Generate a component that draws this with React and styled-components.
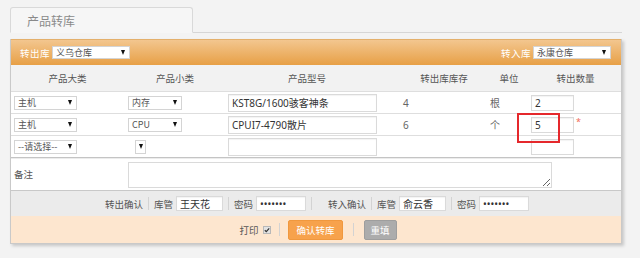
import React from "react";
import styled, { createGlobalStyle } from "styled-components";

const rows = [
  { big: "主机", small: "内存", model: "KST8G/1600骇客神条", stock: "4", unit: "根", qty: "2" },
  { big: "主机", small: "CPU", model: "CPUI7-4790散片", stock: "6", unit: "个", qty: "5", mark: true },
  { big: "--请选择--", small: "", model: "", stock: "", unit: "", qty: "" },
];

const heads = [
  { title: "产品大类" },
  { title: "产品小类" },
  { title: "产品型号" },
  { title: "转出库库存", shift: 12 },
  { title: "单位" },
  { title: "转出数量" },
];

const Select = ({ value, width, height }) => (
  <SelectBox $w={width} $h={height}>
    <span>{value}</span>
    <Arrow />
  </SelectBox>
);

const App = () => {
  return (
    <Page>
      <GlobalStyle />
      <TabBar>
        <Tab>产品转库</Tab>
      </TabBar>

      <Panel>
        <PanelHead>
          <HeadGroup>
            <HeadLabel>转出库</HeadLabel>
            <Select value="义乌仓库" width={78} height={13} />
          </HeadGroup>
          <HeadGroup>
            <HeadLabel>转入库</HeadLabel>
            <Select value="永康仓库" width={78} height={13} />
          </HeadGroup>
        </PanelHead>

        <HeaderRow>
          {heads.map((h) => (
            <HeadCell key={h.title} $shift={h.shift}>
              {h.title}
            </HeadCell>
          ))}
        </HeaderRow>

        {rows.map((r, i) => (
          <Row key={i}>
            <Cell $pad={3}>
              <Select value={r.big} width={63} />
            </Cell>
            <Cell $pad={r.small ? 4 : 11}>
              <Select value={r.small} width={r.small ? 54 : 11} />
            </Cell>
            <Cell $pad={2}>
              <TextInput readOnly value={r.model} $w={149} />
            </Cell>
            <Cell $pad={15}>{r.stock}</Cell>
            <Cell $pad={2}>{r.unit}</Cell>
            <QtyCell>
              <TextInput readOnly value={r.qty} $w={43} $h={16} />
              {r.mark && <Star>*</Star>}
              {r.mark && <RedBox />}
            </QtyCell>
          </Row>
        ))}

        <RemarkRow>
          <RemarkLabel>备注</RemarkLabel>
          <Remark readOnly />
        </RemarkRow>

        <ConfirmRow>
          <Strong>转出确认</Strong>
          <Divider />
          <Field>
            库管<TextInput readOnly value="王天花" $w={47} $h={15} />
          </Field>
          <Divider />
          <Field>
            密码<TextInput type="password" readOnly value="1234567" $w={50} $h={15} />
          </Field>
          <Divider />
          <Strong $gap={11}>转入确认</Strong>
          <Divider />
          <Field>
            库管<TextInput readOnly value="俞云香" $w={47} $h={15} />
          </Field>
          <Divider />
          <Field>
            密码<TextInput type="password" readOnly value="1234567" $w={50} $h={15} />
          </Field>
        </ConfirmRow>

        <ActionRow>
          <Field>
            打印
            <Check viewBox="0 0 8 8" width="8" height="8">
              <rect x="0.5" y="0.5" width="7" height="7" fill="#e2e2e2" stroke="#b8b8b8" />
              <path d="M1.8 4.2 L3.3 5.6 L6.2 2.3" fill="none" stroke="#333" strokeWidth="1.2" />
            </Check>
          </Field>
          <Divider $space={8} />
          <Button $kind="primary">确认转库</Button>
          <Divider $space={10} />
          <Button>重填</Button>
        </ActionRow>
      </Panel>
    </Page>
  );
};

const GlobalStyle = createGlobalStyle`
  html, body {
    margin: 0;
    padding: 0;
    background: #f3f3f3;
  }
  body {
    font-family: "Noto Sans", "Noto Sans CJK SC", sans-serif;
    font-size: 9.5px;
    color: #555;
  }
  * {
    box-sizing: border-box;
  }
`;

const Page = styled.div`
  width: 640px;
  height: 258px;
  padding: 6px 0 0 10px;
  overflow: hidden;
`;

const TabBar = styled.div`
  width: 612px;
  height: 27px;
  border-bottom: 1px solid #d6d6d6;
  display: flex;
  align-items: flex-end;
`;

const Tab = styled.div`
  width: 183px;
  height: 26px;
  margin-bottom: -1px;
  padding-left: 16px;
  line-height: 25px;
  font-family: "Noto Sans CJK SC", sans-serif;
  font-size: 12px;
  color: #8a8a8a;
  background: #f6f6f6;
  border: 1px solid #d9d9d9;
  border-bottom: 1px solid #f6f6f6;
  border-radius: 3px 3px 0 0;
`;

const Panel = styled.div`
  width: 612px;
  margin-top: 6px;
  background: #fff;
  border: 1px solid #c9c9c9;
  border-top: none;
  box-shadow: 2px 2px 3px rgba(0, 0, 0, 0.18);
`;

const PanelHead = styled.div`
  height: 26px;
  padding: 0 10px 0 9px;
  display: flex;
  align-items: center;
  justify-content: space-between;
  background: linear-gradient(#f3c68f, #e7a046);
  border-top: 1px solid #e4b06c;
`;

const HeadGroup = styled.div`
  display: flex;
  align-items: center;
  gap: 2px;
`;

const HeadLabel = styled.span`
  font-family: "Noto Sans CJK SC", sans-serif;
  color: #fff;
  font-size: 9.5px;
  letter-spacing: 0.5px;
`;

const SelectBox = styled.div`
  display: inline-flex;
  align-items: center;
  justify-content: space-between;
  width: ${(p) => p.$w}px;
  height: ${(p) => p.$h || 14}px;
  padding: 0 4px 0 3px;
  background: #fff;
  border: 1px solid #d4d4d4;
  font-family: "Noto Sans CJK SC", sans-serif;
  font-size: 9px;
  line-height: 1;
  color: #555;
  white-space: nowrap;
  overflow: hidden;
`;

const Arrow = styled.i`
  flex: none;
  width: 0;
  height: 0;
  border-left: 2.5px solid transparent;
  border-right: 2.5px solid transparent;
  border-top: 5px solid #111;
`;

const grid = `
  display: grid;
  grid-template-columns: 113px 102px 162px 100px 42px 1fr;
  align-items: center;
`;

const HeaderRow = styled.div`
  ${grid}
  height: 26px;
  background: #f2f2f2;
`;

const HeadCell = styled.div`
  text-align: center;
  padding-left: ${(p) => p.$shift || 0}px;
  font-family: "Noto Sans CJK SC", sans-serif;
  font-size: 9.5px;
  color: #555;
`;

const Row = styled.div`
  ${grid}
  height: 22px;
  border-top: 1px solid #dedede;
`;

const Cell = styled.div`
  padding-left: ${(p) => p.$pad}px;
  display: flex;
  align-items: center;
  font-size: 10px;
  color: #666;
`;

const QtyCell = styled.div`
  position: relative;
  display: flex;
  align-items: center;
  padding-left: 1px;
`;

const Star = styled.span`
  margin-left: 2px;
  margin-top: -6px;
  color: #f26a5a;
  font-size: 9px;
`;

const RedBox = styled.div`
  position: absolute;
  left: -13px;
  top: -4px;
  width: 43px;
  height: 30px;
  border: 2px solid #e5282c;
  z-index: 2;
`;

const TextInput = styled.input`
  width: ${(p) => p.$w}px;
  height: ${(p) => p.$h || 18}px;
  padding: 0 3px;
  margin: 0;
  border: 1px solid #dadada;
  box-shadow: inset 0 1px 1px rgba(0, 0, 0, 0.05);
  background: #fff;
  font-family: "Noto Sans", "Noto Sans CJK SC", sans-serif;
  font-size: 10px;
  color: #333;
  outline: none;
`;

const RemarkRow = styled.div`
  display: grid;
  grid-template-columns: 113px 1fr;
  align-items: center;
  height: 33px;
  border-top: 1px solid #c4c4c4;
  box-shadow: inset 0 1px 0 #ececec;
`;

const RemarkLabel = styled.span`
  padding-left: 3px;
  font-family: "Noto Sans CJK SC", sans-serif;
  color: #555;
`;

const Remark = styled.textarea`
  width: 424px;
  height: 26px;
  margin: 2px 0 0 4px;
  border: 1px solid #dadada;
  background: #fff;
  resize: both;
  outline: none;
`;

const ConfirmRow = styled.div`
  height: 26px;
  display: flex;
  align-items: center;
  justify-content: center;
  background: #ebebeb;
  border-top: 1px solid #c8c8c8;
  padding-left: 2px;
`;

const Strong = styled.span`
  margin-left: ${(p) => p.$gap || 0}px;
  font-family: "Noto Sans CJK SC", sans-serif;
  color: #555;
`;

const Field = styled.span`
  display: inline-flex;
  align-items: center;
  gap: 3px;
  font-family: "Noto Sans CJK SC", sans-serif;
  color: #555;
`;

const Divider = styled.i`
  width: 1px;
  height: 13px;
  margin: 0 ${(p) => p.$space || 5}px;
  background: #d3d3d3;
`;

const ActionRow = styled.div`
  height: 27px;
  display: flex;
  align-items: center;
  justify-content: center;
  background: #fde6cf;
  padding-left: 4px;
`;

const Check = styled.svg`
  display: block;
  margin-left: 2px;
`;

const Button = styled.button`
  height: 20px;
  padding: 0 ${(p) => (p.$kind === "primary" ? 7 : 6)}px;
  border: 1px solid ${(p) => (p.$kind === "primary" ? "#f0983e" : "#9e9e9e")};
  border-radius: 2px;
  background: ${(p) => (p.$kind === "primary" ? "#f7a24c" : "#acacac")};
  color: #fff;
  font-family: "Noto Sans CJK SC", sans-serif;
  font-size: 9.5px;
  cursor: pointer;
`;

export default App;
